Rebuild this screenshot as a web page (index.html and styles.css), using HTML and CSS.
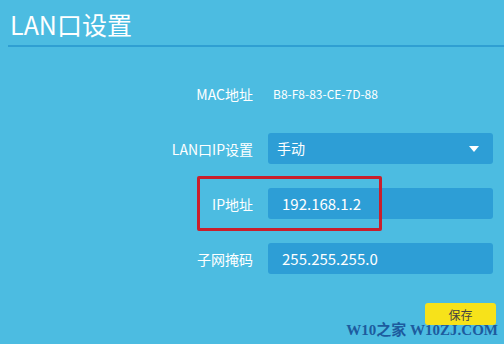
FILE: index.html
```html
<!DOCTYPE html>
<html lang="zh">
<head>
<meta charset="UTF-8" />
<title>LAN口设置</title>
<link rel="stylesheet" href="styles.css">
</head>
<body>

<h1 class="title">LAN口设置</h1>

<div class="form">
  <div class="row">
    <label>MAC地址</label>
    <span class="mac">B8-F8-83-CE-7D-88</span>
  </div>

  <div class="row">
    <label>LAN口IP设置</label>
    <div class="field select">
      <span>手动</span>
      <span class="arrow"></span>
    </div>
  </div>

  <div class="row marked">
    <label>IP地址</label>
    <div class="field ip">192.168.1.2</div>
  </div>

  <div class="row">
    <label>子网掩码</label>
    <div class="field ip">255.255.255.0</div>
  </div>
</div>

<div class="actions">
  <button class="save">保存</button>
</div>

<div class="watermark">W10之家 W10ZJ.COM</div>

</body>
</html>
```

FILE: styles.css
```css
body {
  margin: 0;
  width: 504px;
  height: 344px;
  overflow: hidden;
  position: relative;
  background: #4cbce1;
  font-family: "Noto Sans CJK SC", "Liberation Sans", sans-serif;
  color: #fff;
}
.title {
  margin: 0 0 0 8px;
  padding: 6px 0 0 2px;
  height: 39px;
  font-size: 25px;
  font-weight: normal;
  line-height: 36px;
  border-bottom: 2px solid #2f9fd2;
}
.form {
  display: grid;
  row-gap: 24px;
  margin-top: 31px;
}
.row {
  display: grid;
  grid-template-columns: 253px 225px;
  column-gap: 15px;
  align-items: center;
  height: 31px;
  position: relative;
}
.row label {
  text-align: right;
  font-size: 14px;
}
.mac {
  font-size: 12px;
  margin-left: 5px;
}
.field {
  height: 31px;
  background: #2d9ed6;
  border-radius: 3px;
  box-sizing: border-box;
  font-size: 15px;
  line-height: 31px;
}
.select {
  display: flex;
  justify-content: space-between;
  align-items: center;
  padding: 0 14px 0 9px;
  font-size: 14px;
}
.arrow {
  width: 0;
  height: 0;
  border-left: 5px solid transparent;
  border-right: 5px solid transparent;
  border-top: 6px solid #fff;
}
.ip {
  padding-left: 14px;
}
.marked::after {
  content: "";
  position: absolute;
  left: 197px;
  top: -12px;
  width: 185px;
  height: 55px;
  box-sizing: border-box;
  border: 3px solid #c91f2c;
  border-radius: 2px;
}
.actions {
  display: flex;
  justify-content: flex-end;
  padding: 29px 8px 0 0;
}
.save {
  width: 71px;
  height: 22px;
  background: #f7e21a;
  border: none;
  border-radius: 3px;
  font-family: "Noto Sans CJK SC", sans-serif;
  font-size: 12px;
  color: #444;
  padding: 0;
}
.watermark {
  position: absolute;
  right: 6px;
  bottom: 5px;
  font-family: "Liberation Serif", "Noto Sans CJK SC", serif;
  font-weight: bold;
  font-size: 15px;
  color: #1d5b9e;
}
```
